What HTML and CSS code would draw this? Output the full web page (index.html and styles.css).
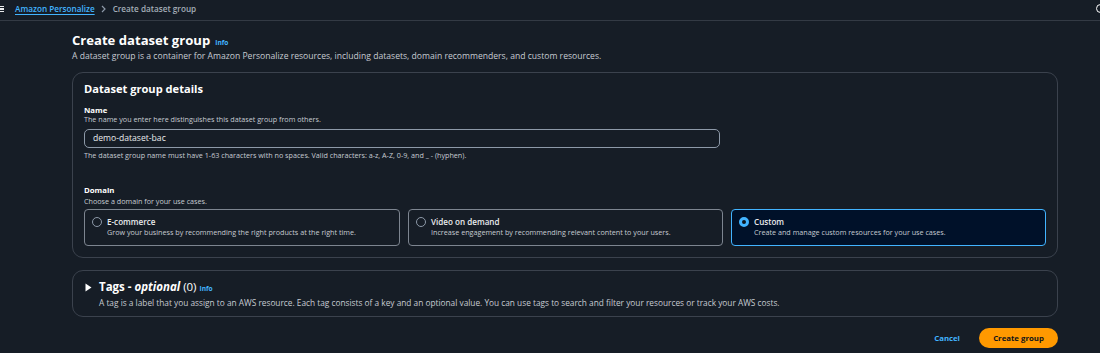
FILE: index.html
```html
<!DOCTYPE html>
<html>
<head>
<meta charset="utf-8">
<link rel="stylesheet" href="styles.css">
</head>
<body>
<header class="topbar">
  <span class="burger"><i></i><i></i><i></i></span>
  <nav class="crumbs">
    <a class="crumb-link">Amazon Personalize</a>
    <svg class="chev" width="6" height="8" viewBox="0 0 6 8"><path d="M1 1l3 3-3 3" fill="none" stroke="#8d99a8" stroke-width="1.2"/></svg>
    <span class="crumb-current">Create dataset group</span>
  </nav>
  <span class="corner-icon"></span>
</header>
<main class="page">
  <div class="page-head">
    <h1 class="title">Create dataset group <span class="info">Info</span></h1>
    <p class="desc">A dataset group is a container for Amazon Personalize resources, including datasets, domain recommenders, and custom resources.</p>
  </div>

  <section class="card">
    <h2 class="card-title">Dataset group details</h2>
    <div class="field">
      <div class="label">Name</div>
      <div class="help">The name you enter here distinguishes this dataset group from others.</div>
      <div class="input">demo-dataset-bac</div>
      <div class="constraint">The dataset group name must have 1-63 characters with no spaces. Valid characters: a-z, A-Z, 0-9, and _ - (hyphen).</div>
    </div>
    <div class="field domain">
      <div class="label">Domain</div>
      <div class="help">Choose a domain for your use cases.</div>
      <div class="tiles">
        <div class="tile">
          <span class="radio"></span>
          <div class="tile-text">
            <div class="tile-title">E-commerce</div>
            <div class="tile-desc">Grow your business by recommending the right products at the right time.</div>
          </div>
        </div>
        <div class="tile">
          <span class="radio"></span>
          <div class="tile-text">
            <div class="tile-title">Video on demand</div>
            <div class="tile-desc">Increase engagement by recommending relevant content to your users.</div>
          </div>
        </div>
        <div class="tile selected">
          <span class="radio checked"></span>
          <div class="tile-text">
            <div class="tile-title">Custom</div>
            <div class="tile-desc">Create and manage custom resources for your use cases.</div>
          </div>
        </div>
      </div>
    </div>
  </section>

  <section class="card tags">
    <div class="tags-head">
      <svg class="caret" width="7" height="9" viewBox="0 0 7 9"><path d="M0.5 0.5L6.5 4.5L0.5 8.5Z" fill="#ffffff"/></svg>
      <h2 class="tags-title">Tags - <em>optional</em> <span class="count">(0)</span> <span class="info">Info</span></h2>
    </div>
    <p class="tags-desc">A tag is a label that you assign to an AWS resource. Each tag consists of a key and an optional value. You can use tags to search and filter your resources or track your AWS costs.</p>
  </section>

  <div class="actions">
    <button class="btn-link">Cancel</button>
    <button class="btn-primary">Create group</button>
  </div>
</main>
</body>
</html>
```
FILE: styles.css
```css
* { box-sizing: border-box; }
html, body {
  margin: 0;
  padding: 0;
  background: #161d26;
  width: 1100px;
  height: 353px;
  overflow: hidden;
  font-family: "Open Sans", "Noto Sans", sans-serif;
  color: #e9ebed;
}
.topbar {
  height: 21px;
  border-bottom: 1px solid #333a44;
  display: flex;
  align-items: center;
  position: relative;
}
.burger {
  width: 4px;
  height: 7px;
  display: flex;
  flex-direction: column;
  justify-content: space-between;
  margin-right: 11px;
  margin-top: -2px;
}
.burger i {
  display: block;
  height: 1.4px;
  background: #e9ebed;
}
.crumbs {
  display: flex;
  align-items: center;
  gap: 6px;
  font-size: 8.2px;
  font-weight: 600;
  margin-top: -3px;
}
.crumb-link {
  color: #42b4ff;
  text-decoration: underline;
  text-underline-offset: 2px;
}
.crumb-current { color: #a4adb8; }
.chev { margin: 0; }
.corner-icon {
  position: absolute;
  right: -5px;
  top: 4px;
  width: 9px;
  height: 9px;
  border-radius: 50%;
  border: 1.5px solid #ffffff;
}
.page {
  padding: 0 42px 0 72px;
}
.page-head { padding-top: 9px; }
.title {
  margin: 0;
  font-size: 13.1px;
  font-weight: 700;
  color: #ffffff;
  line-height: 20px;
  height: 20px;
  display: flex;
  align-items: baseline;
  gap: 5px;
}
.info {
  color: #42b4ff;
  font-size: 6.6px;
  font-weight: 700;
  line-height: 10px;
}
.desc {
  margin: 0;
  font-size: 8.6px;
  color: #c6cbd2;
  line-height: 12px;
}
.card {
  margin-top: 10px;
  border: 1px solid #3b424d;
  border-radius: 11px;
  padding: 8px 11px 11px;
  background: #161d26;
}
.card-title {
  margin: 0;
  font-size: 11.1px;
  font-weight: 700;
  color: #ffffff;
  line-height: 16px;
}
.field { margin-top: 8px; }
.label {
  font-size: 7.8px;
  font-weight: 700;
  color: #ffffff;
  line-height: 10px;
}
.help, .constraint {
  font-size: 7.2px;
  color: #c6cbd2;
  line-height: 9px;
}
.input {
  margin-top: 5px;
  width: 636px;
  height: 19px;
  border: 1px solid #8d99a8;
  border-radius: 5px;
  font-size: 8.6px;
  line-height: 17px;
  padding-left: 8px;
  color: #e9ebed;
}
.constraint { margin-top: 3px; }
.domain { margin-top: 25px; }
.domain .help { margin-top: 2px; }
.tiles {
  display: grid;
  grid-template-columns: 316px 315px 315px;
  column-gap: 8px;
  margin-top: 3px;
}
.tile {
  height: 37px;
  border: 1px solid #7d8590;
  border-radius: 4px;
  display: flex;
  align-items: flex-start;
  padding: 6px 0 0 7px;
  gap: 5px;
}
.tile.selected {
  border-color: #42b4ff;
  background: #001129;
}
.radio {
  width: 10px;
  height: 10px;
  border-radius: 50%;
  border: 1px solid #8d99a8;
  margin-top: 0.5px;
  flex: none;
}
.radio.checked {
  border: 3px solid #42b4ff;
  background: #0f141a;
}
.tile-title {
  font-size: 8.1px;
  font-weight: 600;
  color: #e9ebed;
  line-height: 11px;
}
.tile-desc {
  font-size: 7.2px;
  color: #c6cbd2;
  line-height: 11px;
}
.tags {
  margin-top: 12px;
  padding: 8px 11px 8px;
}
.tags-head {
  display: flex;
  align-items: center;
  gap: 7px;
  padding-left: 1px;
  height: 16px;
}
.tags-title {
  margin: 0;
  font-size: 11.5px;
  font-weight: 700;
  color: #ffffff;
  line-height: 16px;
  height: 16px;
  display: flex;
  align-items: baseline;
  gap: 3px;
}
.tags-title em { font-style: italic; }
.tags-title .count { font-weight: 400; }
.tags-desc {
  margin: 1.5px 0 0;
  padding-left: 15px;
  font-size: 8.3px;
  color: #c6cbd2;
  line-height: 11px;
}
.actions {
  display: flex;
  justify-content: flex-end;
  align-items: center;
  gap: 19px;
  margin-top: 11px;
}
.btn-link {
  background: none;
  border: none;
  color: #42b4ff;
  font-family: inherit;
  font-size: 7.8px;
  font-weight: 700;
  padding: 0;
}
.btn-primary {
  background: #ff9900;
  border: none;
  border-radius: 10px;
  height: 20px;
  width: 79px;
  color: #0f141a;
  font-family: inherit;
  font-size: 7.8px;
  font-weight: 700;
  padding: 0;
}
```
